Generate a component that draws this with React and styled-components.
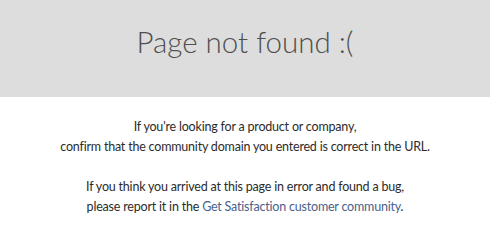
import React from "react";
import styled, { createGlobalStyle } from "styled-components";

const Global = createGlobalStyle`
  html, body { margin: 0; padding: 0; background: #ffffff; }
  body { font-family: "Lato", "Open Sans", sans-serif; }
`;

const Header = styled.header`
  background: #dddddd;
  height: 97px;
  box-sizing: border-box;
  padding-bottom: 14px;
  display: flex;
  align-items: center;
  justify-content: center;
`;

const Title = styled.h1`
  margin: 0;
  font-family: "Lato", sans-serif;
  font-weight: 300;
  font-size: 29.5px;
  color: #4f4f4f;
`;

const Body = styled.main`
  padding-top: 20px;
  display: flex;
  flex-direction: column;
  gap: 20px;
  align-items: center;
`;

const Para = styled.p`
  margin: 0;
  text-align: center;
  font-family: "Lato", sans-serif;
  font-size: 12.5px;
  letter-spacing: -0.2px;
  line-height: 20px;
  color: #2b2b2b;
`;

const Link = styled.a`
  color: #4a5f8c;
  text-decoration: none;
`;

export default function App() {
  return (
    <>
      <Global />
      <Header>
        <Title>Page not found :(</Title>
      </Header>
      <Body>
        <Para>
          If you're looking for a product or company,
          <br />
          confirm that the community domain you entered is correct in the URL.
        </Para>
        <Para>
          If you think you arrived at this page in error and found a bug,
          <br />
          please report it in the <Link href="#">Get Satisfaction customer community</Link>.
        </Para>
      </Body>
    </>
  );
}
